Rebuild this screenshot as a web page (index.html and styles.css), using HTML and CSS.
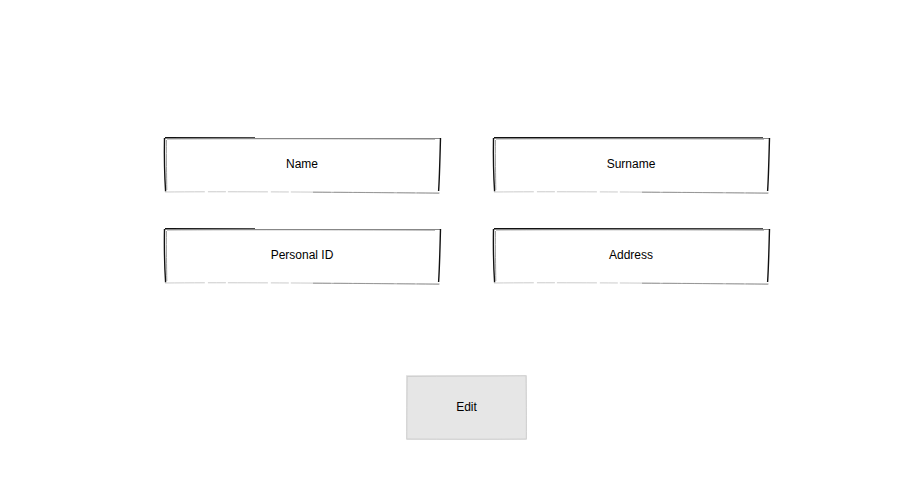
FILE: index.html
```html
<!DOCTYPE html>
<html>
<head>
<meta charset="utf-8">
<link rel="stylesheet" href="styles.css">
</head>
<body>
<div class="page">
  <div class="form">
    <div class="fields">
      <div class="field">
        <svg class="sketch" viewBox="0 0 278 58" preserveAspectRatio="none">
          <path class="dark" d="M2 1.8 C60 1.2 150 1.4 277 1.9"/>
          <path class="mid" d="M4 3 C80 2.6 200 2.8 272 3.2"/>
          <path class="dark" d="M1.5 2 C1.2 20 1.6 40 2.6 55.5"/>
          <path class="mid" d="M3.5 4 C3.3 22 3.6 40 3.8 54"/>
          <path class="dark" d="M277.5 2 C277 20 276.6 40 275.6 55"/>
          <path class="light" d="M2 56 C60 55.5 120 55.8 277 57"/>
          <path class="mid" d="M150 56.2 C200 56.5 240 56.8 276 57.2"/>
        </svg>
        <span>Name</span>
      </div>
      <div class="field">
        <svg class="sketch" viewBox="0 0 278 58" preserveAspectRatio="none">
          <path class="dark" d="M2 1.8 C60 1.2 150 1.4 277 1.9"/>
          <path class="mid" d="M4 3 C80 2.6 200 2.8 272 3.2"/>
          <path class="dark" d="M1.5 2 C1.2 20 1.6 40 2.6 55.5"/>
          <path class="mid" d="M3.5 4 C3.3 22 3.6 40 3.8 54"/>
          <path class="dark" d="M277.5 2 C277 20 276.6 40 275.6 55"/>
          <path class="light" d="M2 56 C60 55.5 120 55.8 277 57"/>
          <path class="mid" d="M150 56.2 C200 56.5 240 56.8 276 57.2"/>
        </svg>
        <span>Surname</span>
      </div>
      <div class="field">
        <svg class="sketch" viewBox="0 0 278 58" preserveAspectRatio="none">
          <path class="dark" d="M2 1.8 C60 1.2 150 1.4 277 1.9"/>
          <path class="mid" d="M4 3 C80 2.6 200 2.8 272 3.2"/>
          <path class="dark" d="M1.5 2 C1.2 20 1.6 40 2.6 55.5"/>
          <path class="mid" d="M3.5 4 C3.3 22 3.6 40 3.8 54"/>
          <path class="dark" d="M277.5 2 C277 20 276.6 40 275.6 55"/>
          <path class="light" d="M2 56 C60 55.5 120 55.8 277 57"/>
          <path class="mid" d="M150 56.2 C200 56.5 240 56.8 276 57.2"/>
        </svg>
        <span>Personal ID</span>
      </div>
      <div class="field">
        <svg class="sketch" viewBox="0 0 278 58" preserveAspectRatio="none">
          <path class="dark" d="M2 1.8 C60 1.2 150 1.4 277 1.9"/>
          <path class="mid" d="M4 3 C80 2.6 200 2.8 272 3.2"/>
          <path class="dark" d="M1.5 2 C1.2 20 1.6 40 2.6 55.5"/>
          <path class="mid" d="M3.5 4 C3.3 22 3.6 40 3.8 54"/>
          <path class="dark" d="M277.5 2 C277 20 276.6 40 275.6 55"/>
          <path class="light" d="M2 56 C60 55.5 120 55.8 277 57"/>
          <path class="mid" d="M150 56.2 C200 56.5 240 56.8 276 57.2"/>
        </svg>
        <span>Address</span>
      </div>
    </div>
    <div class="button">
      <svg class="sketch" viewBox="0 0 121 65" preserveAspectRatio="none">
        <path class="btn-edge" d="M1 1.5 C40 1 80 1.2 120 0.8"/>
        <path class="btn-edge" d="M1.2 1 C1 20 0.8 45 0.8 64"/>
        <path class="btn-edge" d="M120 1 C120.2 20 120.5 45 120.3 64"/>
        <path class="btn-edge" d="M1 64 C40 64.2 80 64.4 120 64"/>
      </svg>
      <span>Edit</span>
    </div>
  </div>
</div>
</body>
</html>
```
FILE: styles.css
```css
html, body {
  margin: 0;
  padding: 0;
  background: #ffffff;
}
body {
  width: 919px;
  height: 498px;
  overflow: hidden;
  font-family: "Liberation Sans", Arial, sans-serif;
  font-size: 12px;
  color: #000000;
}
.page {
  padding-top: 136px;
  padding-left: 163px;
}
.form {
  width: 607px;
  display: flex;
  flex-direction: column;
  align-items: center;
}
.fields {
  display: grid;
  grid-template-columns: 278px 278px;
  column-gap: 51px;
  row-gap: 33px;
}
.field {
  position: relative;
  height: 58px;
  box-sizing: border-box;
  padding-bottom: 2px;
  display: flex;
  align-items: center;
  justify-content: center;
}
.field span {
  position: relative;
}
.sketch {
  position: absolute;
  left: 0;
  top: 0;
  width: 100%;
  height: 100%;
  overflow: visible;
}
.sketch path {
  fill: none;
}
.dark {
  stroke: #111111;
  stroke-width: 1.4;
}
.mid {
  stroke: #888888;
  stroke-width: 0.8;
}
.light {
  stroke: #cccccc;
  stroke-width: 1;
  stroke-dasharray: 40 3 18 2;
}
.button {
  position: relative;
  margin-top: 90px;
  width: 121px;
  height: 65px;
  box-sizing: border-box;
  padding-bottom: 2px;
  background: #e6e6e6;
  display: flex;
  align-items: center;
  justify-content: center;
}
.button span {
  position: relative;
}
.btn-edge {
  stroke: #cfcfcf;
  stroke-width: 1;
}
```
